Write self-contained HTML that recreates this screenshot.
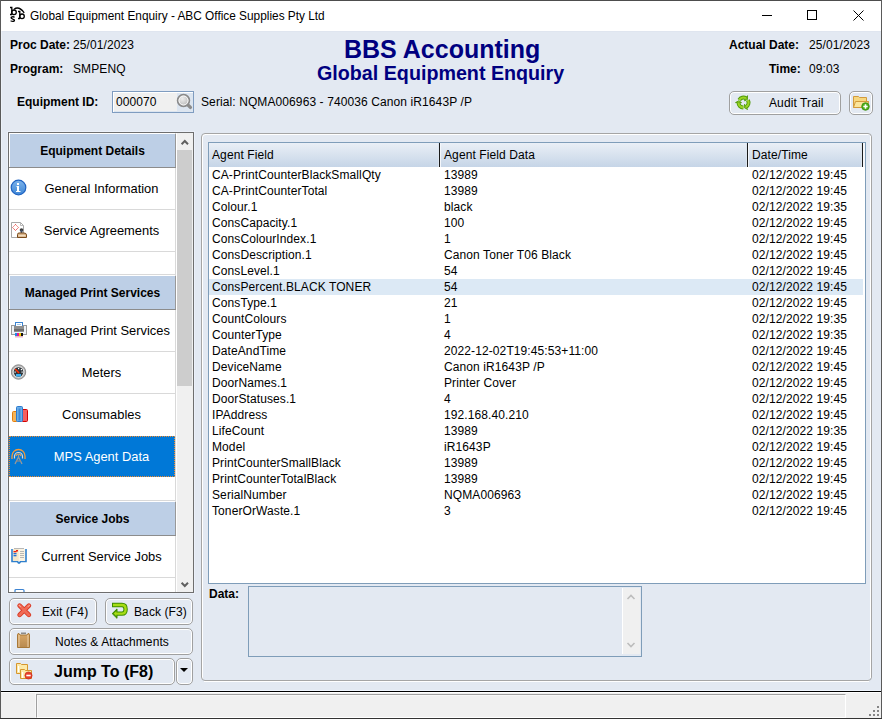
<!DOCTYPE html>
<html><head><meta charset="utf-8">
<style>
*{box-sizing:border-box;margin:0;padding:0}
html,body{width:882px;height:719px;overflow:hidden;background:#E3E9F2;font-family:"Liberation Sans",sans-serif;font-size:12px;color:#000}
.a{position:absolute}
.t{position:absolute;white-space:pre;line-height:16px;font-size:12px;letter-spacing:0.1px}
.b{font-weight:bold;letter-spacing:0}
.navy{color:#000080}
.btn{position:absolute;border:1px solid #A0A0A0;border-radius:5px;box-shadow:inset 0 0 0 1px #fff;background:#E3E9F2}
.hd{left:10px;width:166px;background:#BDCFE6;border-right:1px solid #999}
.hl{position:absolute;left:9px;width:166px;height:1px;background:#D9D9D9}
.ht{position:absolute;left:10px;width:165px;text-align:center;font-weight:bold;font-size:12px;line-height:16px;white-space:pre}
.it{position:absolute;left:28px;width:147px;text-align:center;font-size:12.9px;line-height:16px;white-space:pre;padding-top:0.6px}
</style></head><body>
<!-- window frame -->
<div class="a" style="left:0;top:0;width:882px;height:719px;background:#E3E9F2"></div>
<div class="a" style="left:0;top:0;width:882px;height:31px;background:#fff"></div>
<div class="a" style="left:1px;top:31px;width:880px;height:1px;background:#DFE5EF"></div>
<div class="a" style="left:1px;top:31px;width:1px;height:660px;background:#EDF2F9"></div>
<div class="a" style="left:0;top:0;width:882px;height:1px;background:#4d4d4d"></div>
<div class="a" style="left:0;top:0;width:1px;height:719px;background:#5a5a5a"></div>
<div class="a" style="left:881px;top:0;width:1px;height:719px;background:#5a5a5a"></div>
<div class="a" style="left:0;top:718px;width:882px;height:1px;background:#333"></div>

<!-- title bar -->
<div class="t" style="left:30px;top:8px;font-size:11.85px;letter-spacing:0">Global Equipment Enquiry - ABC Office Supplies Pty Ltd</div>
<div class="a" style="left:762px;top:15px;width:10px;height:1px;background:#000"></div>
<div class="a" style="left:807px;top:10px;width:10px;height:10px;border:1px solid #000"></div>
<svg class="a" style="left:853px;top:10px" width="11" height="11" viewBox="0 0 11 11"><path d="M0.5 0.5L10.5 10.5M10.5 0.5L0.5 10.5" stroke="#000" stroke-width="1"/></svg>

<!-- header -->
<div class="t b" style="left:10px;top:37px">Proc Date:</div>
<div class="t" style="left:73px;top:37px">25/01/2023</div>
<div class="t b" style="left:10px;top:61px">Program:</div>
<div class="t" style="left:73px;top:61px">SMPENQ</div>
<div class="t b navy" style="left:344px;top:35px;font-size:25px;line-height:28px">BBS Accounting</div>
<div class="t b navy" style="left:317px;top:61px;font-size:19.7px;line-height:24px">Global Equipment Enquiry</div>
<div class="t b" style="left:729px;top:37px">Actual Date:</div>
<div class="t" style="left:809px;top:37px">25/01/2023</div>
<div class="t b" style="left:769px;top:61px">Time:</div>
<div class="t" style="left:809px;top:61px">09:03</div>

<div class="t b" style="left:17px;top:94px">Equipment ID:</div>
<div class="a" style="left:112px;top:91px;width:82px;height:22px;border:1px solid #7F9CC0;background:#DCE5F0;box-shadow:inset 1px 1px 0 #fff"></div>
<div class="a" style="left:114px;top:93px;width:63px;height:18px;background:#F0F0F0"></div>
<div class="t" style="left:116px;top:94px">000070</div>
<div class="t" style="left:201px;top:94px">Serial: NQMA006963 - 740036 Canon iR1643P /P</div>

<!-- audit trail -->
<div class="a" style="left:729px;top:91px;width:112px;height:24px;border:1px solid #A0A0A0;border-radius:5px;box-shadow:inset 0 0 0 1px #fff;background:#E3E9F2"></div>
<div class="t" style="left:769px;top:95px">Audit Trail</div>
<div class="a" style="left:849px;top:91px;width:24px;height:24px;border:1px solid #A0A0A0;border-radius:5px;box-shadow:inset 0 0 0 1px #fff;background:#E3E9F2"></div>

<!-- left panel -->
<div class="a" style="left:7px;top:131px;width:188px;height:463px;border:1px solid #EBF0F9"></div>
<div class="a" style="left:8px;top:132px;width:186px;height:461px;border:1px solid #6E6E6E;background:#fff"></div>
<div class="a" style="left:9px;top:133px;width:184px;height:1px;background:#fff"></div>
<!-- headers -->
<div class="a" style="left:175px;top:133px;width:1px;height:459px;background:#D9D9D9"></div>
<div class="a hd" style="top:134px;height:33px"></div>
<div class="a hl" style="top:167px;width:167px;background:#8C8C8C"></div>
<div class="a hl" style="top:209px"></div>
<div class="a hl" style="top:251px"></div>
<div class="a hl" style="top:274px"></div>
<div class="a hd" style="top:276px;height:33px"></div>
<div class="a hl" style="top:309px;width:167px;background:#8C8C8C"></div>
<div class="a hl" style="top:351px"></div>
<div class="a hl" style="top:393px"></div>
<div class="a hl" style="top:500px"></div>
<div class="a hd" style="top:502px;height:33px"></div>
<div class="a hl" style="top:535px;width:167px;background:#8C8C8C"></div>
<div class="a hl" style="top:577px"></div>
<!-- selected -->
<div class="a" style="left:9px;top:436px;width:166px;height:41px;background:#0078D7;border:1px dotted #F28C2E"></div>
<div class="ht" style="top:143px">Equipment Details</div>
<div class="ht" style="top:285px">Managed Print Services</div>
<div class="ht" style="top:511px">Service Jobs</div>
<div class="it" style="top:180px">General Information</div>
<div class="it" style="top:222px">Service Agreements</div>
<div class="it" style="top:322px">Managed Print Services</div>
<div class="it" style="top:364px">Meters</div>
<div class="it" style="top:406px">Consumables</div>
<div class="it" style="top:448px;color:#fff">MPS Agent Data</div>
<div class="it" style="top:548px">Current Service Jobs</div>
<!-- scrollbar -->
<div class="a" style="left:176px;top:133px;width:1px;height:459px;background:#fff"></div>
<div class="a" style="left:177px;top:133px;width:16px;height:459px;background:#F0F0F0"></div>
<div class="a" style="left:177px;top:150px;width:15px;height:236px;background:#CDCDCD"></div>
<svg class="a" style="left:180px;top:138px" width="10" height="8" viewBox="0 0 10 8"><path d="M1.6 6.2L4.8 3L8 6.2" fill="none" stroke="#606060" stroke-width="2"/></svg>
<svg class="a" style="left:180px;top:581px" width="10" height="8" viewBox="0 0 10 8"><path d="M1.6 1.8L4.8 5L8 1.8" fill="none" stroke="#606060" stroke-width="2"/></svg>

<!-- content panel -->
<div class="a" style="left:201px;top:133px;width:671px;height:548px;border:1px solid #A5A5A5;border-radius:4px;box-shadow:inset 1px 1px 0 #fff"></div>
<div class="a" style="left:870px;top:136px;width:1px;height:542px;background:#fff"></div>
<div class="a" style="left:204px;top:681px;width:665px;height:1px;background:#fff"></div>
<div class="a" style="left:208px;top:142px;width:658px;height:442px;border:1px solid #7F9DB9;background:#fff"></div>
<div class="a" style="left:209px;top:143px;width:656px;height:24px;background:linear-gradient(#EAEFF6,#C6D5E7)"></div>
<div class="a" style="left:438px;top:143px;width:1px;height:24px;background:#DCE5EF"></div>
<div class="a" style="left:439px;top:143px;width:1px;height:24px;background:#1A1A1A"></div>
<div class="a" style="left:440px;top:143px;width:1px;height:24px;background:#F4F7FB"></div>
<div class="a" style="left:746px;top:143px;width:1px;height:24px;background:#DCE5EF"></div>
<div class="a" style="left:747px;top:143px;width:1px;height:24px;background:#1A1A1A"></div>
<div class="a" style="left:748px;top:143px;width:1px;height:24px;background:#F4F7FB"></div>
<div class="a" style="left:861px;top:143px;width:1px;height:24px;background:#DCE5EF"></div>
<div class="a" style="left:862px;top:143px;width:1px;height:24px;background:#1A1A1A"></div>
<div class="a" style="left:863px;top:143px;width:2px;height:24px;background:#F4F7FB"></div>
<div class="t" style="left:212px;top:147px">Agent Field</div>
<div class="t" style="left:444px;top:147px">Agent Field Data</div>
<div class="t" style="left:752px;top:147px">Date/Time</div>
<div class="a" style="left:209px;top:279px;width:654px;height:16px;background:#DCE9F5"></div>
<div class="t" style="left:212px;top:167px">CA-PrintCounterBlackSmallQty</div><div class="t" style="left:444px;top:167px">13989</div><div class="t" style="left:752px;top:167px">02/12/2022 19:45</div>
<div class="t" style="left:212px;top:183px">CA-PrintCounterTotal</div><div class="t" style="left:444px;top:183px">13989</div><div class="t" style="left:752px;top:183px">02/12/2022 19:45</div>
<div class="t" style="left:212px;top:199px">Colour.1</div><div class="t" style="left:444px;top:199px">black</div><div class="t" style="left:752px;top:199px">02/12/2022 19:35</div>
<div class="t" style="left:212px;top:215px">ConsCapacity.1</div><div class="t" style="left:444px;top:215px">100</div><div class="t" style="left:752px;top:215px">02/12/2022 19:45</div>
<div class="t" style="left:212px;top:231px">ConsColourIndex.1</div><div class="t" style="left:444px;top:231px">1</div><div class="t" style="left:752px;top:231px">02/12/2022 19:45</div>
<div class="t" style="left:212px;top:247px">ConsDescription.1</div><div class="t" style="left:444px;top:247px">Canon Toner T06 Black</div><div class="t" style="left:752px;top:247px">02/12/2022 19:45</div>
<div class="t" style="left:212px;top:263px">ConsLevel.1</div><div class="t" style="left:444px;top:263px">54</div><div class="t" style="left:752px;top:263px">02/12/2022 19:45</div>
<div class="t" style="left:212px;top:279px">ConsPercent.BLACK TONER</div><div class="t" style="left:444px;top:279px">54</div><div class="t" style="left:752px;top:279px">02/12/2022 19:45</div>
<div class="t" style="left:212px;top:295px">ConsType.1</div><div class="t" style="left:444px;top:295px">21</div><div class="t" style="left:752px;top:295px">02/12/2022 19:45</div>
<div class="t" style="left:212px;top:311px">CountColours</div><div class="t" style="left:444px;top:311px">1</div><div class="t" style="left:752px;top:311px">02/12/2022 19:35</div>
<div class="t" style="left:212px;top:327px">CounterType</div><div class="t" style="left:444px;top:327px">4</div><div class="t" style="left:752px;top:327px">02/12/2022 19:35</div>
<div class="t" style="left:212px;top:343px">DateAndTime</div><div class="t" style="left:444px;top:343px">2022-12-02T19:45:53+11:00</div><div class="t" style="left:752px;top:343px">02/12/2022 19:45</div>
<div class="t" style="left:212px;top:359px">DeviceName</div><div class="t" style="left:444px;top:359px">Canon iR1643P /P</div><div class="t" style="left:752px;top:359px">02/12/2022 19:45</div>
<div class="t" style="left:212px;top:375px">DoorNames.1</div><div class="t" style="left:444px;top:375px">Printer Cover</div><div class="t" style="left:752px;top:375px">02/12/2022 19:45</div>
<div class="t" style="left:212px;top:391px">DoorStatuses.1</div><div class="t" style="left:444px;top:391px">4</div><div class="t" style="left:752px;top:391px">02/12/2022 19:45</div>
<div class="t" style="left:212px;top:407px">IPAddress</div><div class="t" style="left:444px;top:407px">192.168.40.210</div><div class="t" style="left:752px;top:407px">02/12/2022 19:45</div>
<div class="t" style="left:212px;top:423px">LifeCount</div><div class="t" style="left:444px;top:423px">13989</div><div class="t" style="left:752px;top:423px">02/12/2022 19:35</div>
<div class="t" style="left:212px;top:439px">Model</div><div class="t" style="left:444px;top:439px">iR1643P</div><div class="t" style="left:752px;top:439px">02/12/2022 19:45</div>
<div class="t" style="left:212px;top:455px">PrintCounterSmallBlack</div><div class="t" style="left:444px;top:455px">13989</div><div class="t" style="left:752px;top:455px">02/12/2022 19:45</div>
<div class="t" style="left:212px;top:471px">PrintCounterTotalBlack</div><div class="t" style="left:444px;top:471px">13989</div><div class="t" style="left:752px;top:471px">02/12/2022 19:45</div>
<div class="t" style="left:212px;top:487px">SerialNumber</div><div class="t" style="left:444px;top:487px">NQMA006963</div><div class="t" style="left:752px;top:487px">02/12/2022 19:45</div>
<div class="t" style="left:212px;top:503px">TonerOrWaste.1</div><div class="t" style="left:444px;top:503px">3</div><div class="t" style="left:752px;top:503px">02/12/2022 19:45</div>

<!-- data area -->
<div class="t b" style="left:209px;top:586px">Data:</div>
<div class="a" style="left:248px;top:586px;width:394px;height:71px;border:1px solid #7F9DB9"></div>
<div class="a" style="left:622px;top:588px;width:1px;height:66px;background:#fff"></div>
<div class="a" style="left:623px;top:588px;width:17px;height:66px;background:#F0F0F0"></div>
<svg class="a" style="left:626px;top:593px" width="10" height="8" viewBox="0 0 10 8"><path d="M1.5 6L5 2.5L8.5 6" fill="none" stroke="#BDBDBD" stroke-width="1.6"/></svg>
<svg class="a" style="left:626px;top:641px" width="10" height="8" viewBox="0 0 10 8"><path d="M1.5 2L5 5.5L8.5 2" fill="none" stroke="#BDBDBD" stroke-width="1.6"/></svg>

<!-- buttons -->
<div class="btn" style="left:9px;top:598px;width:88px;height:27px"></div>
<div class="t" style="left:42px;top:604px">Exit (F4)</div>
<div class="btn" style="left:105px;top:598px;width:88px;height:27px"></div>
<div class="t" style="left:134px;top:604px">Back (F3)</div>
<div class="btn" style="left:9px;top:628px;width:184px;height:27px"></div>
<div class="t" style="left:55px;top:634px">Notes &amp; Attachments</div>
<div class="btn" style="left:9px;top:658px;width:166px;height:27px"></div>
<div class="t b" style="left:54px;top:662px;font-size:16px;line-height:20px">Jump To (F8)</div>
<div class="btn" style="left:176px;top:658px;width:17px;height:27px"></div>
<svg class="a" style="left:179px;top:667px" width="10" height="6" viewBox="0 0 10 6"><path d="M1 1H9L5 5Z" fill="#000"/></svg>

<!-- status bar -->
<div class="a" style="left:1px;top:691px;width:880px;height:1px;background:#000"></div>
<div class="a" style="left:1px;top:692px;width:880px;height:26px;background:#F0F0F0"></div>
<div class="a" style="left:1px;top:690px;width:880px;height:1px;background:#EEF4FC"></div>
<div class="a" style="left:1px;top:692px;width:880px;height:1px;background:#fff"></div>
<div class="a" style="left:35px;top:693px;width:1px;height:25px;background:#F8F8F8"></div>
<div class="a" style="left:36px;top:694px;width:810px;height:24px;border-left:1px solid #A0A0A0;border-top:1px solid #A0A0A0;border-right:1px solid #fff;border-bottom:1px solid #fff;box-shadow:inset 1px 1px 0 #F8F8F8"></div>
<div class="a" style="left:877px;top:706px;width:2px;height:2px;background:#858585"></div>
<div class="a" style="left:873px;top:710px;width:2px;height:2px;background:#858585"></div>
<div class="a" style="left:877px;top:710px;width:2px;height:2px;background:#858585"></div>
<div class="a" style="left:869px;top:714px;width:2px;height:2px;background:#858585"></div>
<div class="a" style="left:873px;top:714px;width:2px;height:2px;background:#858585"></div>
<div class="a" style="left:877px;top:714px;width:2px;height:2px;background:#858585"></div>

<!-- icons -->
<svg class="a" style="left:8px;top:4px" width="20" height="20" viewBox="0 0 20 20">
 <path d="M2 3.5H3.8V10.5M2 10.5H4" fill="none" stroke="#000" stroke-width="1.3"/>
 <circle cx="6" cy="8.3" r="2.3" fill="none" stroke="#000" stroke-width="1.3"/>
 <path d="M10 7.5H11.8V14.5M10 14.5H12" fill="none" stroke="#000" stroke-width="1.3"/>
 <circle cx="14" cy="12.3" r="2.3" fill="none" stroke="#000" stroke-width="1.3"/>
 <path d="M6.6 13.4Q5.8 12.6 4.2 12.8Q2.6 13.1 3.4 14.3Q4.4 15.2 5.8 15.6Q7 16.4 6 17.2Q4.4 17.8 2.6 16.8" fill="none" stroke="#000" stroke-width="1.3"/>
 <path d="M6 5.2 Q 11 1.6 16.2 8.8" fill="none" stroke="#000" stroke-width="1.25"/>
</svg>
<svg class="a" style="left:176px;top:93px" width="18" height="18" viewBox="0 0 18 18">
 <defs><radialGradient id="mg" cx="0.4" cy="0.35" r="0.7"><stop offset="0" stop-color="#EDEDED"/><stop offset="1" stop-color="#B5B5B5"/></radialGradient></defs>
 <path d="M11.6 11.6L14.4 14.4" stroke="#8C8C8C" stroke-width="3.4" stroke-linecap="round"/>
 <circle cx="7.5" cy="7.5" r="5.9" fill="url(#mg)" stroke="#8A8A8A" stroke-width="1.7"/>
 <circle cx="7.5" cy="7.5" r="4.5" fill="none" stroke="#FAFAFA" stroke-width="1"/>
</svg>
<svg class="a" style="left:733px;top:92px" width="20" height="20" viewBox="0 0 20 20">
 <g fill="none" stroke="#4F9A0A" stroke-width="4" stroke-linecap="butt"><path d="M6.26 7.95A5.0 5.0 0 0 1 13.00 6.27"/><path d="M14.91 8.25A5.0 5.0 0 0 1 13.00 14.93"/><path d="M10.33 15.60A5.0 5.0 0 0 1 5.50 10.60"/></g>
 <g fill="#98D224" stroke="#4F9A0A" stroke-width="0.9" stroke-linejoin="round"><path d="M14.50 3.67L14.44 7.52L11.50 8.87Z"/><path d="M14.50 17.53L11.20 15.55L11.50 12.33Z"/><path d="M2.50 10.60L5.86 8.73L8.50 10.60Z"/></g>
 <g fill="none" stroke="#9CD526" stroke-width="2.2" stroke-linecap="butt"><path d="M6.26 7.95A5.0 5.0 0 0 1 13.00 6.27"/><path d="M14.91 8.25A5.0 5.0 0 0 1 13.00 14.93"/><path d="M10.33 15.60A5.0 5.0 0 0 1 5.50 10.60"/></g>
</svg>
<svg class="a" style="left:852px;top:94px" width="18" height="18" viewBox="0 0 18 18">
 <path d="M1.5 2.5H6.5L7.5 3.5H14.5V7.5H16.5L14.5 13.5H1.5Z" fill="#F7D77E" stroke="#D29A3C" stroke-width="1"/>
 <path d="M3.5 7.5H16.5L14.5 13.5H1.5Z" fill="#FBE59C" stroke="#D29A3C" stroke-width="1"/>
 <circle cx="13.5" cy="12.5" r="3.8" fill="#4CAE18" stroke="#3A8C10" stroke-width="0.8"/>
 <path d="M13.5 10.3V14.7M11.3 12.5H15.7" stroke="#fff" stroke-width="1.6"/>
</svg>
<svg class="a" style="left:10px;top:179px" width="17" height="17" viewBox="0 0 17 17">
 <defs><linearGradient id="ig" x1="0" y1="0" x2="0" y2="1"><stop offset="0" stop-color="#7DB3EA"/><stop offset="1" stop-color="#3E86D6"/></linearGradient></defs>
 <circle cx="8.5" cy="8.5" r="7.3" fill="url(#ig)" stroke="#1E62C2" stroke-width="1.2"/>
 <rect x="7" y="4" width="2" height="2" fill="#fff"/>
 <path d="M6.5 7H9V12H10.5V13H6V12H7V8H6.5Z" fill="#fff"/>
</svg>
<svg class="a" style="left:11px;top:222px" width="17" height="17" viewBox="0 0 17 17">
 <path d="M0.5 0.5H9.5L12.5 3.5V15.5H0.5Z" fill="#fff" stroke="#A8A8A8" stroke-width="1"/>
 <path d="M9.5 0.5V3.5H12.5" fill="none" stroke="#A8A8A8" stroke-width="0.8"/>
 <path d="M4.5 2.5L7.5 5.5L4.5 8.5L1.5 5.5Z" fill="none" stroke="#E8302A" stroke-width="1" stroke-dasharray="1 0.6"/>
 <circle cx="10.5" cy="8" r="1.8" fill="#3C3C3C"/>
 <rect x="9.6" y="8" width="1.8" height="4" fill="#3C4A60"/>
 <path d="M6.5 15.5V12.5Q6.5 11 8 11H13Q15.5 11 15.5 13V15.5Z" fill="#D9B48A" stroke="#7A4A1A" stroke-width="1"/>
 <rect x="7.5" y="13" width="7" height="1.3" fill="#F2DDC0"/>
</svg>
<svg class="a" style="left:11px;top:322px" width="17" height="17" viewBox="0 0 17 17">
 <rect x="0.5" y="3.5" width="15" height="9" fill="#EEF2F6" stroke="#9C9C9C" stroke-width="1"/>
 <rect x="4.5" y="0.5" width="7" height="4" fill="#fff" stroke="#3C84D0" stroke-width="1"/>
 <rect x="6" y="2" width="4" height="1" fill="#9CC8F0"/>
 <rect x="3" y="4" width="10" height="6" fill="#8F8F8F"/>
 <rect x="3" y="7" width="10" height="2" fill="#6C6C6C"/>
 <rect x="4" y="11" width="8" height="4.5" fill="#fff"/>
 <rect x="4" y="11" width="2" height="3" fill="#1E8AE8"/>
 <rect x="6" y="11" width="2" height="3" fill="#E0189A"/>
 <rect x="8" y="11" width="2" height="3" fill="#F8C800"/>
 <rect x="10" y="11" width="2" height="3" fill="#111"/>
 <rect x="4" y="14" width="8" height="1.5" fill="#E8B8C8"/>
</svg>
<svg class="a" style="left:11px;top:364px" width="17" height="17" viewBox="0 0 17 17">
 <circle cx="7.5" cy="8" r="7.2" fill="#B8B8B8" stroke="#8A8A8A" stroke-width="1"/>
 <circle cx="7.5" cy="8" r="5.8" fill="#E6E6E6"/>
 <circle cx="7.5" cy="8" r="4.8" fill="#30383E"/>
 <rect x="5" y="10" width="5" height="2.5" fill="#3DB0F0"/>
 <path d="M4.2 5L8 9" stroke="#FF2A00" stroke-width="1.6"/>
 <rect x="7" y="4" width="1.2" height="1.2" fill="#fff"/><rect x="9.8" y="5" width="1.2" height="1.2" fill="#fff"/>
 <rect x="3.5" y="7.5" width="1.2" height="1.2" fill="#fff"/><rect x="10.5" y="7.5" width="1.2" height="1.2" fill="#fff"/>
</svg>
<svg class="a" style="left:12px;top:406px" width="16" height="16" viewBox="0 0 16 16">
 <rect x="0.5" y="5.5" width="5" height="10" rx="1" fill="#F6B45A" stroke="#E57E0C" stroke-width="1"/>
 <rect x="10" y="3.5" width="5.5" height="12" rx="1" fill="#F46060" stroke="#D40000" stroke-width="1"/>
 <rect x="4.5" y="0.5" width="6" height="15" rx="1" fill="#6AAEE8" stroke="#2C7ACF" stroke-width="1"/>
 <rect x="6.5" y="2.5" width="2" height="12" fill="#3F88D8"/>
</svg>
<svg class="a" style="left:11px;top:448px" width="17" height="17" viewBox="0 0 17 17">
 <path d="M1 11V8A6.5 6.5 0 0 1 14 8V11" fill="none" stroke="#F29A3A" stroke-width="1.3"/>
 <path d="M3.5 10.5V8.5A4 4 0 0 1 11.5 8.5V10.5" fill="none" stroke="#D8D8D8" stroke-width="1.2"/>
 <path d="M5 8A2.6 2.6 0 0 1 10 8" fill="none" stroke="#F29A3A" stroke-width="1.2"/>
 <path d="M7.5 6.5V10M4 16L7 10H8L11 16" fill="none" stroke="#9A9A9A" stroke-width="1.3"/>
 <path d="M5 13H10" stroke="#8A8A8A" stroke-width="1.2"/>
</svg>
<svg class="a" style="left:11px;top:548px" width="17" height="17" viewBox="0 0 17 17">
 <rect x="3" y="0" width="10" height="1" fill="#B8B8B8"/>
 <path d="M1 1V13.5H6.5L7.5 15H8.5L9.5 13.5H15V1" fill="none" stroke="#2F7FCC" stroke-width="1.6"/>
 <rect x="2" y="1" width="5.8" height="12" fill="#F6E6C8"/>
 <rect x="8.2" y="1" width="5.8" height="12" fill="#FBF3E2"/>
 <rect x="2.5" y="3" width="3" height="1.3" fill="#E82010"/><rect x="5" y="2" width="2" height="1.5" fill="#E82010"/>
 <rect x="2.5" y="5" width="3" height="1.3" fill="#2070D8"/>
 <rect x="2.5" y="7" width="3" height="1.3" fill="#2070D8"/>
 <rect x="9" y="3" width="4" height="0.8" fill="#A8A8A8"/><rect x="9" y="5" width="4" height="0.8" fill="#A8A8A8"/>
 <rect x="9" y="7" width="4" height="0.8" fill="#A8A8A8"/><rect x="9" y="9" width="4" height="0.8" fill="#A8A8A8"/>
</svg>
<svg class="a" style="left:14px;top:588px" width="12" height="4" viewBox="0 0 12 4">
 <path d="M1 4V2.5Q1 1.5 2 1.5H9Q10 1.5 10 2.5V4" fill="none" stroke="#3D84D2" stroke-width="1.2"/>
</svg>
<svg class="a" style="left:16px;top:602px" width="17" height="17" viewBox="0 0 17 17">
 <path d="M3.6 3.6L12.9 12.9M12.9 3.6L3.6 12.9" stroke="#D93A26" stroke-width="4.6" stroke-linecap="round"/>
 <path d="M3.6 3.6L12.9 12.9M12.9 3.6L3.6 12.9" stroke="#F06A55" stroke-width="2.8" stroke-linecap="round"/>
 <path d="M3 3.2L4.5 4.7M13.5 3.2L12 4.7" stroke="#FFC8B8" stroke-width="1" />
</svg>
<svg class="a" style="left:111px;top:602px" width="18" height="18" viewBox="0 0 18 18">
 <path d="M3.2 3H11Q14.6 3 14.6 7.2Q14.6 11.6 11 11.6H6" fill="none" stroke="#3C8C00" stroke-width="4.4" stroke-linecap="square"/>
 <path d="M1.2 11.6L6 6.9V16.3Z" fill="#3C8C00" stroke="#3C8C00" stroke-width="1" stroke-linejoin="round"/>
 <path d="M3.2 3H11Q14.6 3 14.6 7.2Q14.6 11.6 11 11.6H6" fill="none" stroke="#A6DC14" stroke-width="2.4" stroke-linecap="square"/>
 <path d="M2.6 11.6L5.4 8.9V14.3Z" fill="#A6DC14"/>
</svg>
<svg class="a" style="left:16px;top:632px" width="16" height="17" viewBox="0 0 16 17">
 <defs><linearGradient id="cg" x1="0" y1="0" x2="0" y2="1"><stop offset="0" stop-color="#D9A868"/><stop offset="1" stop-color="#B88A50"/></linearGradient></defs>
 <rect x="5" y="0.5" width="5" height="1.5" fill="#8A8A8A"/>
 <path d="M1.5 2.5Q1.5 1.5 3 1.5L4 3H11L12 1.5Q13.5 1.5 13.5 2.5V15.5H1.5Z" fill="url(#cg)" stroke="#A87838" stroke-width="1"/>
 <rect x="2.5" y="3" width="1" height="12" fill="#F0D2A8"/><rect x="11.5" y="3" width="1" height="12" fill="#F0D2A8"/>
</svg>
<svg class="a" style="left:15px;top:662px" width="18" height="18" viewBox="0 0 18 18">
 <path d="M1.5 1.5H5.5L6.5 2.5H12.5V11.5H1.5Z" fill="#FCE9A8" stroke="#D6962E" stroke-width="1"/>
 <path d="M5.5 7.5H9.5L10.5 8.5H16.5V16.5H5.5Z" fill="#FCE9A8" stroke="#D6962E" stroke-width="1"/>
 <rect x="3" y="4" width="1.2" height="6" fill="#fff"/><rect x="7" y="10" width="1.2" height="6" fill="#fff"/>
 <circle cx="13.5" cy="13.5" r="3.6" fill="#E8402A" stroke="#C02A18" stroke-width="0.6"/>
 <rect x="11.3" y="12.7" width="4.4" height="1.6" fill="#fff"/>
</svg>
</body></html>
